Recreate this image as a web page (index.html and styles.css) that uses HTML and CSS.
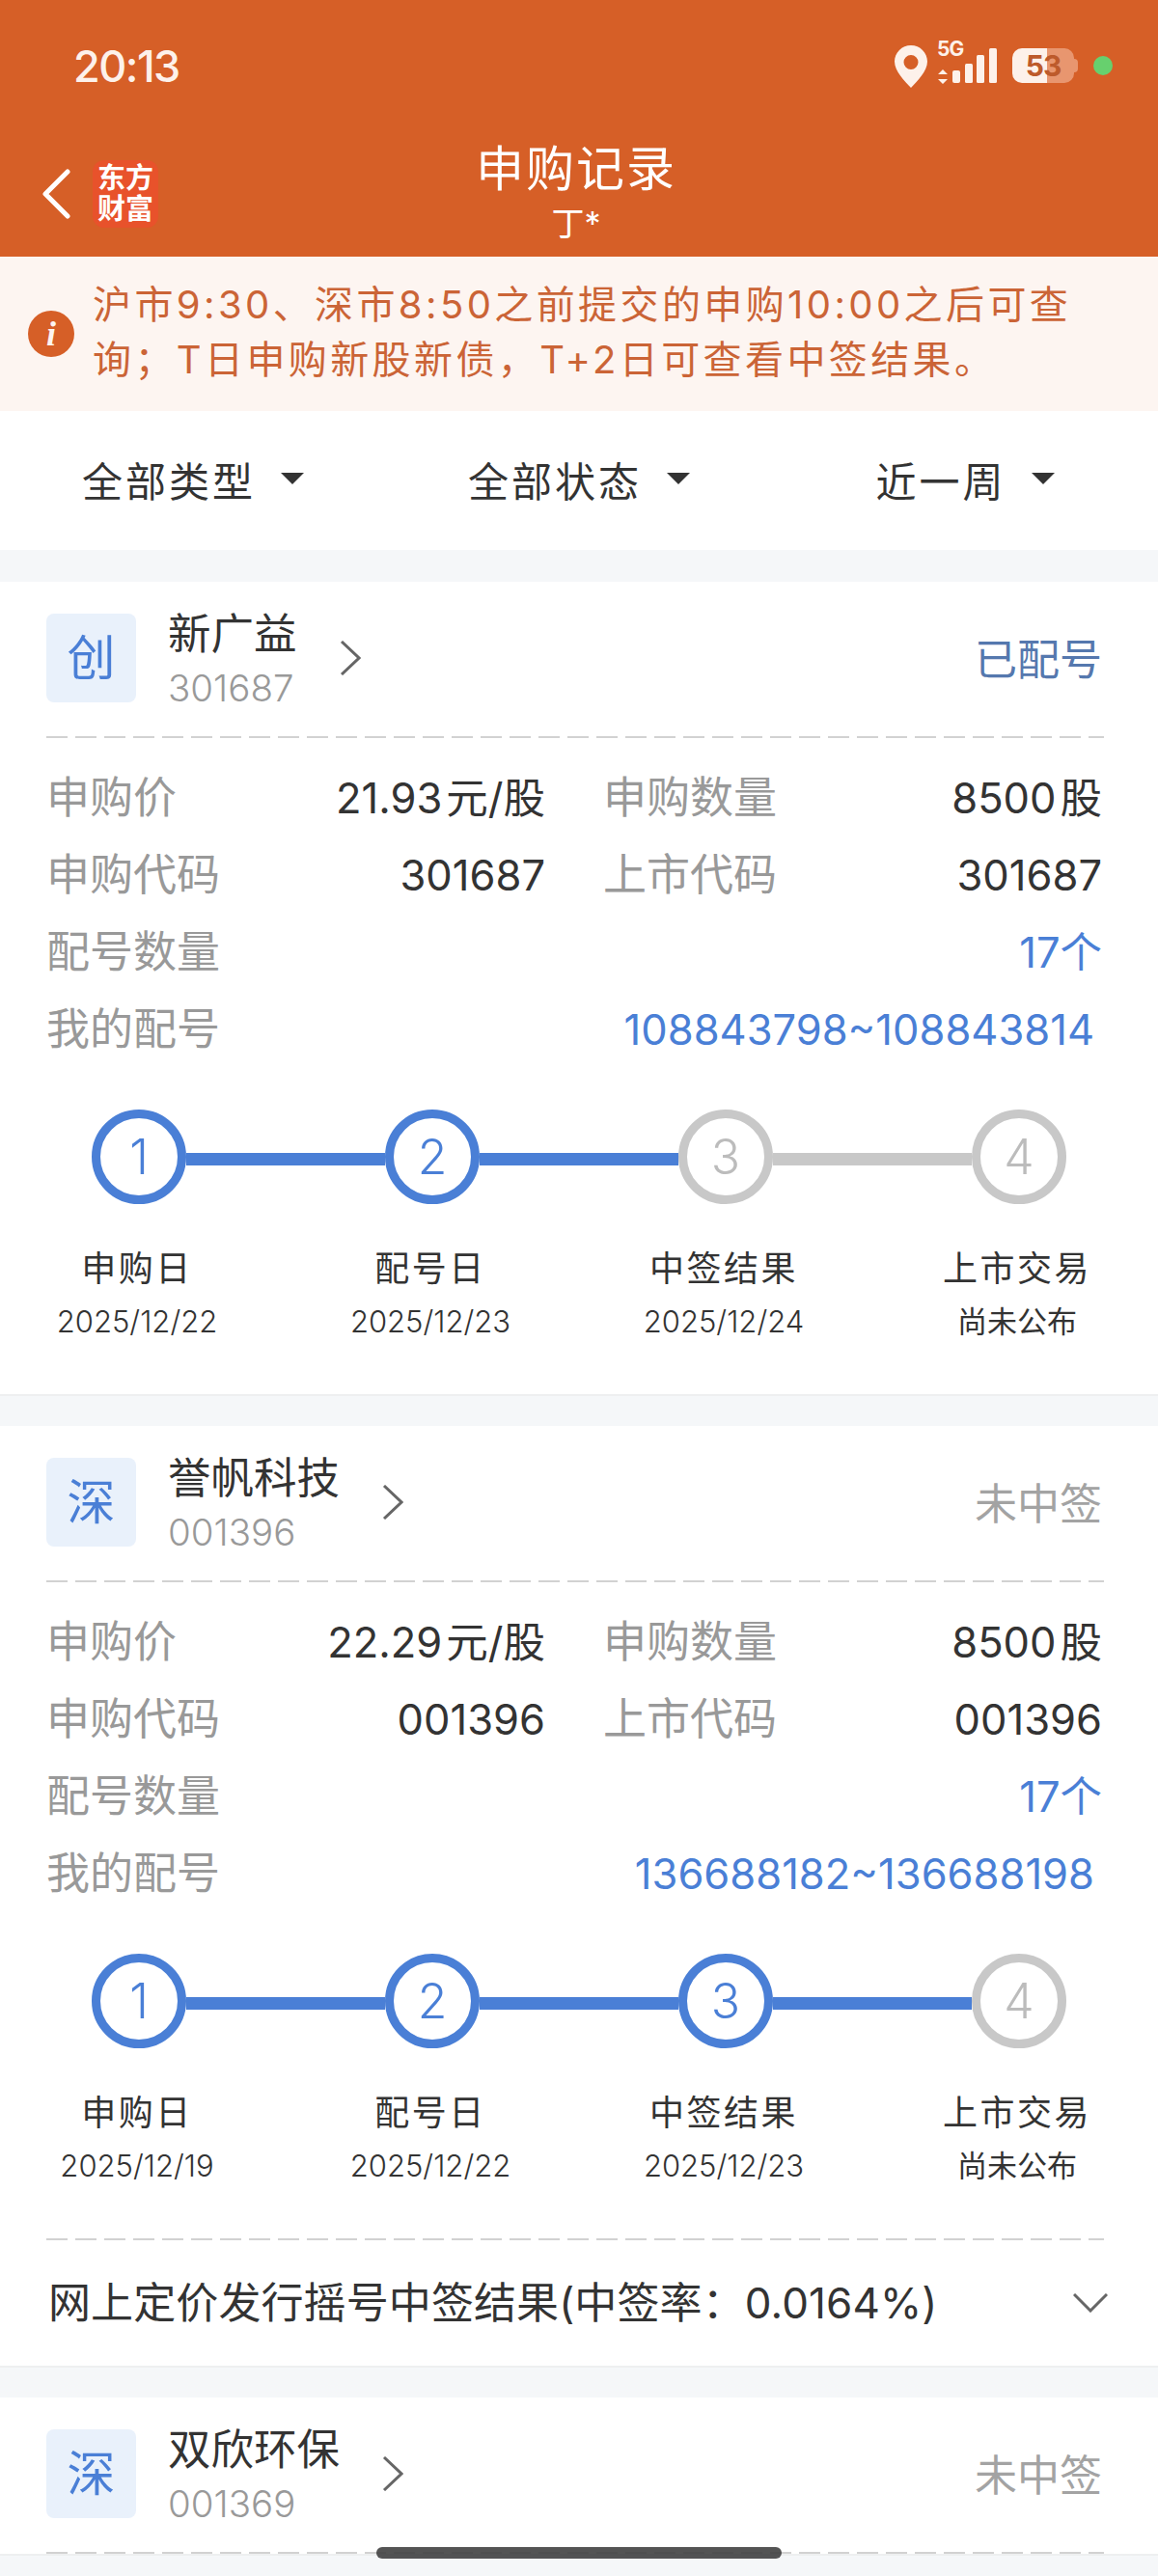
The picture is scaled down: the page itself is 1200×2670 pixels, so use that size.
FILE: index.html
```html
<!DOCTYPE html>
<html lang="zh-CN">
<head>
    <meta charset="UTF-8">
    <title>申购记录</title>
    <link rel="stylesheet" href="styles.css">
</head>
<body>
    <header class="header">
        <div class="statusbar">
            <span class="time">20:13</span>
            <div class="status-icons">
                <svg class="pin" width="34" height="44" viewBox="0 0 34 44">
                    <path fill-rule="evenodd" fill="#fdf1ea" d="M17 0C7.600 0 0 7.500 0 16.800 0 27 10.500 37 17 44c6.500-7 17-17 17-27.200C34 7.500 26.400 0 17 0zm0 10a7.500 7.500 0 1 1 0 15 7.500 7.500 0 0 1 0-15z"/>
                </svg>
                <div class="signal">
                    <span class="net">5G</span>
                    <svg width="62" height="38" viewBox="0 0 62 38">
                        <path fill="#fdf1ea" d="M6 23l5 5H1zM6 38l-5-5h10z"/>
                        <rect x="16" y="24" width="8" height="13" rx="2" fill="#fdf1ea"/>
                        <rect x="29" y="17" width="8" height="20" rx="1.500" fill="#fdf1ea"/>
                        <rect x="41" y="8" width="8" height="29" rx="1.500" fill="#fdf1ea"/>
                        <rect x="54" y="1" width="8" height="36" rx="1.500" fill="#fdf1ea"/>
                    </svg>
                </div>
                <div class="battery">53</div>
                <span class="dot"></span>
            </div>
        </div>
        <div class="nav">
            <div class="nav-left">
                <svg width="30" height="52" viewBox="0 0 30 52">
                    <path d="M27 3L4 26l23 23" fill="none" stroke="#fff" stroke-width="5" stroke-linecap="round" stroke-linejoin="round"/>
                </svg>
                <div class="logo">东方<br>财富</div>
            </div>
            <div class="nav-title">
                <div class="title">申购记录</div>
                <div class="subtitle">丁*</div>
            </div>
        </div>
    </header>

    <div class="notice">
        <span class="notice-icon">i</span>
        <p>沪市9:30、深市8:50之前提交的申购10:00之后可查询；T日申购新股新债，T+2日可查看中签结果。</p>
    </div>

    <div class="filters">
        <div class="filter">全部类型<svg width="24" height="12" viewBox="0 0 24 12"><path d="M0 0h24L12 12z" fill="#333"/></svg></div>
        <div class="filter">全部状态<svg width="24" height="12" viewBox="0 0 24 12"><path d="M0 0h24L12 12z" fill="#333"/></svg></div>
        <div class="filter">近一周<svg width="24" height="12" viewBox="0 0 24 12"><path d="M0 0h24L12 12z" fill="#333"/></svg></div>
    </div>

    <section class="card">
        <div class="card-head">
            <div class="tag">创</div>
            <div class="stock">
                <div class="stock-name">新广益</div>
                <div class="stock-code">301687</div>
            </div>
            <svg class="arrow" width="22" height="36" viewBox="0 0 22 36"><path d="M2 1l18 17L2 35" fill="none" stroke="#666" stroke-width="3"/></svg>
            <div class="state state-blue">已配号</div>
        </div>
        <div class="dash"></div>
        <div class="info">
            <div class="row">
                <div class="pair"><span class="label">申购价</span><span class="value">21.93<span class="unit">元/股</span></span></div>
                <div class="pair"><span class="label">申购数量</span><span class="value">8500<span class="unit">股</span></span></div>
            </div>
            <div class="row">
                <div class="pair"><span class="label">申购代码</span><span class="value">301687</span></div>
                <div class="pair"><span class="label">上市代码</span><span class="value">301687</span></div>
            </div>
            <div class="row">
                <span class="label">配号数量</span><span class="value link">17个</span>
            </div>
            <div class="row">
                <span class="label">我的配号</span><span class="value link range">108843798~108843814</span>
            </div>
        </div>
        <div class="steps">
            <div class="step">
                <div class="step-head"><i class="bar bar-none"></i><span class="circle on">1</span><i class="bar on"></i></div>
                <div class="step-name">申购日</div>
                <div class="step-date">2025/12/22</div>
            </div>
            <div class="step">
                <div class="step-head"><i class="bar on"></i><span class="circle on">2</span><i class="bar on"></i></div>
                <div class="step-name">配号日</div>
                <div class="step-date">2025/12/23</div>
            </div>
            <div class="step">
                <div class="step-head"><i class="bar on"></i><span class="circle">3</span><i class="bar"></i></div>
                <div class="step-name">中签结果</div>
                <div class="step-date">2025/12/24</div>
            </div>
            <div class="step">
                <div class="step-head"><i class="bar"></i><span class="circle">4</span><i class="bar bar-none"></i></div>
                <div class="step-name">上市交易</div>
                <div class="step-date step-tbd">尚未公布</div>
            </div>
        </div>
    </section>

    <section class="card">
        <div class="card-head">
            <div class="tag">深</div>
            <div class="stock">
                <div class="stock-name">誉帆科技</div>
                <div class="stock-code">001396</div>
            </div>
            <svg class="arrow" width="22" height="36" viewBox="0 0 22 36"><path d="M2 1l18 17L2 35" fill="none" stroke="#666" stroke-width="3"/></svg>
            <div class="state">未中签</div>
        </div>
        <div class="dash"></div>
        <div class="info">
            <div class="row">
                <div class="pair"><span class="label">申购价</span><span class="value">22.29<span class="unit">元/股</span></span></div>
                <div class="pair"><span class="label">申购数量</span><span class="value">8500<span class="unit">股</span></span></div>
            </div>
            <div class="row">
                <div class="pair"><span class="label">申购代码</span><span class="value">001396</span></div>
                <div class="pair"><span class="label">上市代码</span><span class="value">001396</span></div>
            </div>
            <div class="row">
                <span class="label">配号数量</span><span class="value link">17个</span>
            </div>
            <div class="row">
                <span class="label">我的配号</span><span class="value link range">136688182~136688198</span>
            </div>
        </div>
        <div class="steps">
            <div class="step">
                <div class="step-head"><i class="bar bar-none"></i><span class="circle on">1</span><i class="bar on"></i></div>
                <div class="step-name">申购日</div>
                <div class="step-date">2025/12/19</div>
            </div>
            <div class="step">
                <div class="step-head"><i class="bar on"></i><span class="circle on">2</span><i class="bar on"></i></div>
                <div class="step-name">配号日</div>
                <div class="step-date">2025/12/22</div>
            </div>
            <div class="step">
                <div class="step-head"><i class="bar on"></i><span class="circle on">3</span><i class="bar on"></i></div>
                <div class="step-name">中签结果</div>
                <div class="step-date">2025/12/23</div>
            </div>
            <div class="step">
                <div class="step-head"><i class="bar on"></i><span class="circle">4</span><i class="bar bar-none"></i></div>
                <div class="step-name">上市交易</div>
                <div class="step-date step-tbd">尚未公布</div>
            </div>
        </div>
        <div class="dash"></div>
        <div class="result">
            <span class="result-text">网上定价发行摇号中签结果(中签率：0.0164%)</span>
            <svg width="36" height="20" viewBox="0 0 36 20"><path d="M1 1l17 17L35 1" fill="none" stroke="#666" stroke-width="3"/></svg>
        </div>
    </section>

    <section class="card">
        <div class="card-head">
            <div class="tag">深</div>
            <div class="stock">
                <div class="stock-name">双欣环保</div>
                <div class="stock-code">001369</div>
            </div>
            <svg class="arrow" width="22" height="36" viewBox="0 0 22 36"><path d="M2 1l18 17L2 35" fill="none" stroke="#666" stroke-width="3"/></svg>
            <div class="state">未中签</div>
        </div>
        <div class="dash"></div>
    </section>

    <div class="home-bar"></div>
</body>
</html>
```

FILE: styles.css
```css
* {
    box-sizing: border-box;
}

body {
    position: relative;
    margin: 0;
    height: 2670px;
    overflow: hidden;
    background-color: #f5f7f9;
    color: #333;
    font-family: Inter, "Noto Sans CJK SC", sans-serif;
    font-weight: 300;
}

/* cabeçalho */
.header {
    height: 266px;
    background-color: #d65f27;
    color: #fff;
}

.statusbar {
    display: flex;
    justify-content: space-between;
    align-items: center;
    height: 136px;
    padding: 0 47px 0 76px;
}

.time {
    font-size: 45px;
    font-weight: 500;
    letter-spacing: -1.500px;
    color: #fdf1ea;
}

.status-icons {
    display: flex;
    align-items: center;
}

.pin {
    margin-top: 2px;
}

.signal {
    position: relative;
    width: 62px;
    height: 40px;
    margin-left: 10px;
}

.signal svg {
    position: absolute;
    left: 0;
    top: 1px;
}

.net {
    position: absolute;
    left: 0;
    top: -9px;
    font-size: 21px;
    font-weight: 700;
    letter-spacing: -1px;
    line-height: 24px;
    color: #fdf1ea;
}

.battery {
    position: relative;
    width: 64px;
    height: 36px;
    margin-left: 16px;
    border-radius: 10px;
    background: linear-gradient(90deg, #fdf1ea 0, #fdf1ea 36px, #e8966f 36px);
    color: #bd5a2b;
    font-size: 30px;
    font-weight: 700;
    line-height: 36px;
    text-align: center;
    letter-spacing: -1px;
}

.battery::after {
    content: "";
    position: absolute;
    right: -4px;
    top: 11px;
    width: 4px;
    height: 14px;
    border-radius: 0 4px 4px 0;
    background-color: #e8966f;
}

.dot {
    width: 20px;
    height: 20px;
    margin-left: 20px;
    border-radius: 50%;
    background-color: #67d06e;
}

.nav {
    display: grid;
    grid-template-columns: 1fr auto 1fr;
    height: 130px;
    padding-left: 43px;
}

.nav-left {
    display: flex;
    align-items: center;
}

.logo {
    width: 68px;
    height: 70px;
    margin-left: 23px;
    border-radius: 12px;
    background-color: #e8522b;
    font-size: 29px;
    font-weight: 700;
    line-height: 32px;
    text-align: center;
    padding-top: 3px;
}

.nav-title {
    text-align: center;
    padding-right: 49px;
}

.title {
    margin-top: 9px;
    font-size: 50px;
    font-weight: 400;
    letter-spacing: 2px;
    line-height: 60px;
}

.subtitle {
    margin-top: 5px;
    font-size: 34px;
    font-weight: 400;
    line-height: 44px;
}

/* aviso */
.notice {
    display: flex;
    align-items: center;
    height: 160px;
    padding: 0 70px 4px 29px;
    background-color: #fdf5f1;
    color: #cb6436;
}

.notice p {
    margin: 0 0 0 19px;
    font-size: 40px;
    font-weight: 400;
    letter-spacing: 3.400px;
    line-height: 57px;
}

.notice-icon {
    flex: none;
    width: 48px;
    height: 48px;
    margin-top: 4px;
    border-radius: 50%;
    background-color: #d65f27;
    color: #fdf4f0;
    font-family: "Liberation Serif", serif;
    font-size: 36px;
    font-style: italic;
    font-weight: 700;
    line-height: 48px;
    text-align: center;
}

/* filtros */
.filters {
    display: flex;
    height: 144px;
    padding-bottom: 4px;
    background-color: #fff;
}

.filter {
    flex: 1;
    display: flex;
    justify-content: center;
    align-items: center;
    font-size: 42px;
    font-weight: 400;
    letter-spacing: 3px;
}

.filter svg {
    margin-left: 26px;
}

/* cartões */
.card {
    margin-top: 33px;
    padding: 0 56px 0 48px;
    background-color: #fff;
    border-bottom: 2px solid #eeeff0;
}

.card + .card {
    margin-top: 31px;
}

.card-head {
    display: flex;
    align-items: flex-start;
    padding: 26px 0 22px;
    font-weight: 400;
}

.tag {
    flex: none;
    width: 93px;
    height: 92px;
    margin-top: 7px;
    border-radius: 8px;
    background-color: #e9f1fb;
    color: #4a7fd6;
    font-size: 50px;
    line-height: 92px;
    text-align: center;
}

.stock {
    margin-left: 33px;
}

.stock-name {
    font-size: 44.500px;
    line-height: 56px;
}

.stock-code {
    font-size: 38.500px;
    font-weight: 300;
    line-height: 56px;
    color: #999;
}

.arrow {
    align-self: center;
    margin: 0 0 6px 44px;
}

.state {
    align-self: center;
    margin: 0 0 6px auto;
    padding: 0 2px 3px 0;
    font-size: 44px;
    color: #a3a3a3;
}

.state-blue {
    color: #5578ae;
}

.dash {
    height: 2px;
    background: repeating-linear-gradient(90deg, #d2d2d2 0, #d2d2d2 22px, transparent 22px, transparent 30px);
}

.info {
    padding: 22px 2px 0 0;
}

.row {
    display: flex;
    justify-content: space-between;
    height: 80px;
    line-height: 80px;
    font-size: 43.500px;
}

.row .pair + .pair {
    margin-left: 60px;
}

.pair {
    flex: 1;
    display: flex;
    justify-content: space-between;
}

.label {
    color: #999;
    font-size: 45px;
    font-weight: 400;
}

.value {
    font-weight: 400;
}

.unit {
    margin-left: 4px;
}

.link {
    color: #4a7fd6;
}

.range {
    padding-right: 8px;
}

/* etapas */
.steps {
    display: grid;
    grid-template-columns: repeat(4, 304px);
    margin: 43px -64px 0 -56px;
    padding-bottom: 55px;
}

.step {
    text-align: center;
}

.step-head {
    display: flex;
    align-items: center;
}

.bar {
    flex: 1;
    height: 13px;
    margin-top: 4px;
    background-color: #c8c8c8;
}

.bar.on {
    background-color: #4a7fd6;
}

.bar.bar-none {
    background: none;
}

.circle {
    flex: none;
    width: 98px;
    height: 98px;
    border: 9px solid #c8c8c8;
    border-radius: 50%;
    color: #bcbcbc;
    font-size: 50px;
    font-weight: 300;
    line-height: 80px;
}

.circle.on {
    border-color: #4a7fd6;
    color: #4a7fd6;
}

.step-name {
    margin-top: 47px;
    padding-right: 4px;
    font-size: 36px;
    font-weight: 400;
    letter-spacing: 2.500px;
    line-height: 40px;
}

.step-date {
    margin-top: 15px;
    padding-right: 4px;
    font-size: 31px;
    line-height: 40px;
}

.step-tbd {
    font-size: 31px;
    font-weight: 400;
}

.result {
    display: flex;
    justify-content: space-between;
    align-items: center;
    height: 130px;
    padding-left: 2px;
    margin-right: -4px;
    font-size: 44px;
    font-weight: 400;
}

.result-text {
    padding-bottom: 6px;
    letter-spacing: 0.100px;
}

.home-bar {
    position: absolute;
    left: 390px;
    top: 2640px;
    width: 420px;
    height: 12px;
    border-radius: 6px;
    background-color: rgba(60, 60, 60, 0.88);
}
```
